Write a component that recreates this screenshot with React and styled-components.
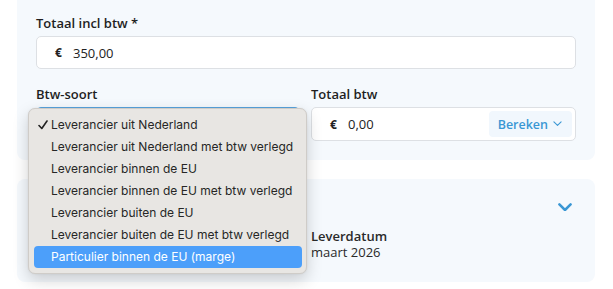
import React from 'react';
import styled, { createGlobalStyle } from 'styled-components';

const GlobalStyle = createGlobalStyle`
  body {
    margin: 0;
    background: #ffffff;
    font-family: 'Open Sans', 'Liberation Sans', sans-serif;
    color: #222;
  }
`;

const StyledPage = styled.div`
  position: relative;
  width: 613px;
  height: 289px;
  padding: 0 18px 0 17px;
  box-sizing: border-box;
  overflow: hidden;
`;

const StyledPanel = styled.section`
  background: #f5f9fd;
  border-radius: ${({ top }) => (top ? '0 0 8px 8px' : '8px')};
  padding: ${({ top }) => (top ? '14px 19px 19px' : '18px 19px 22px')};
  margin-top: ${({ top }) => (top ? '0' : '19px')};
`;

const StyledField = styled.div`
  display: flex;
  flex-direction: column;
  gap: 4px;
`;

const StyledLabel = styled.label`
  font-size: 13px;
  font-weight: 600;
  line-height: 18px;
  color: #1f1f1f;
`;

const StyledInput = styled.div`
  display: flex;
  align-items: center;
  height: ${({ tall }) => (tall ? '34px' : '33px')};
  box-sizing: border-box;
  background: #fff;
  border: 1px solid ${({ focused }) => (focused ? '#5aa6e0' : '#dde0e4')};
  border-radius: 5px;
  padding: 0 3px 0 18px;
  font-size: 13px;
  color: #222;
`;

const StyledCurrency = styled.span`
  font-weight: 700;
  font-size: 12px;
  width: 18px;
`;

const StyledValue = styled.span`
  flex: 1;
`;

const StyledRow = styled.div`
  display: grid;
  grid-template-columns: 264px 1fr;
  gap: 11px;
  margin-top: 16px;
`;

const StyledBereken = styled.button`
  display: flex;
  align-items: center;
  gap: 5px;
  height: 26px;
  padding: 0 10px 0 9px;
  border: 0;
  border-radius: 4px;
  background: #f1f7fd;
  color: #3a97d4;
  font-family: inherit;
  font-size: 12.5px;
  font-weight: 600;
`;

const StyledPanelHeader = styled.div`
  display: flex;
  justify-content: flex-end;
  align-items: center;
  height: 20px;
  padding-right: 4px;
`;

const StyledDetails = styled.div`
  display: grid;
  grid-template-columns: 264px 1fr;
  gap: 11px;
  margin-top: 12px;
`;

const StyledDetail = styled.div`
  display: flex;
  flex-direction: column;
  gap: 1px;
  font-size: 13px;
  line-height: 15px;
  color: #2a2a2a;
`;

const StyledDetailTitle = styled.span`
  font-weight: 600;
`;

const StyledMenu = styled.ul`
  position: absolute;
  left: 28px;
  top: 108px;
  width: 279px;
  box-sizing: border-box;
  margin: 0;
  padding: 5px 4px 5px 5px;
  list-style: none;
  background: #e8e6e3;
  border: 1px solid #cfccc8;
  border-radius: 7px;
  box-shadow: 0 6px 16px rgba(0, 0, 0, 0.18), 0 0 2px rgba(0, 0, 0, 0.08);
  font-family: Inter, 'Liberation Sans', sans-serif;
  font-size: 12px;
`;

const StyledOption = styled.li`
  position: relative;
  height: 22px;
  line-height: 22px;
  padding-left: 17px;
  border-radius: 4px;
  color: ${({ active }) => (active ? '#fff' : '#262626')};
  background: ${({ active }) => (active ? '#4c9ffa' : 'transparent')};
  white-space: nowrap;
`;

const StyledCheck = styled.svg`
  position: absolute;
  left: 4px;
  top: 6px;
`;

const Chevron = ({ size = 10, color = '#3a97d4', width = 1.5 }) => (
  <svg width={size} height={size * 0.6} viewBox="0 0 10 6" fill="none">
    <path d="M1 1l4 4 4-4" stroke={color} strokeWidth={width} strokeLinecap="round" strokeLinejoin="round" />
  </svg>
);

const options = [
  'Leverancier uit Nederland',
  'Leverancier uit Nederland met btw verlegd',
  'Leverancier binnen de EU',
  'Leverancier binnen de EU met btw verlegd',
  'Leverancier buiten de EU',
  'Leverancier buiten de EU met btw verlegd',
  'Particulier binnen de EU (marge)',
];

const App = () => (
  <>
    <GlobalStyle />
    <StyledPage>
      <StyledPanel top>
        <StyledField>
          <StyledLabel>Totaal incl btw *</StyledLabel>
          <StyledInput>
            <StyledCurrency>€</StyledCurrency>
            <StyledValue>350,00</StyledValue>
          </StyledInput>
        </StyledField>
        <StyledRow>
          <StyledField>
            <StyledLabel>Btw-soort</StyledLabel>
            <StyledInput tall focused />
          </StyledField>
          <StyledField>
            <StyledLabel>Totaal btw</StyledLabel>
            <StyledInput tall>
              <StyledCurrency>€</StyledCurrency>
              <StyledValue>0,00</StyledValue>
              <StyledBereken>
                Bereken
                <Chevron size={9} width={1.2} />
              </StyledBereken>
            </StyledInput>
          </StyledField>
        </StyledRow>
      </StyledPanel>
      <StyledPanel>
        <StyledPanelHeader>
          <Chevron size={14} width={1.8} />
        </StyledPanelHeader>
        <StyledDetails>
          <StyledDetail />
          <StyledDetail>
            <StyledDetailTitle>Leverdatum</StyledDetailTitle>
            <span>maart 2026</span>
          </StyledDetail>
        </StyledDetails>
      </StyledPanel>
      <StyledMenu>
        {options.map((option, i) => (
          <StyledOption key={option} active={i === options.length - 1}>
            {i === 0 && (
              <StyledCheck width="10" height="10" viewBox="0 0 10 10" fill="none">
                <path d="M1 5.5l2.8 3L9 1" stroke="#222" strokeWidth="1.6" strokeLinecap="round" strokeLinejoin="round" />
              </StyledCheck>
            )}
            {option}
          </StyledOption>
        ))}
      </StyledMenu>
    </StyledPage>
  </>
);

export default App;
